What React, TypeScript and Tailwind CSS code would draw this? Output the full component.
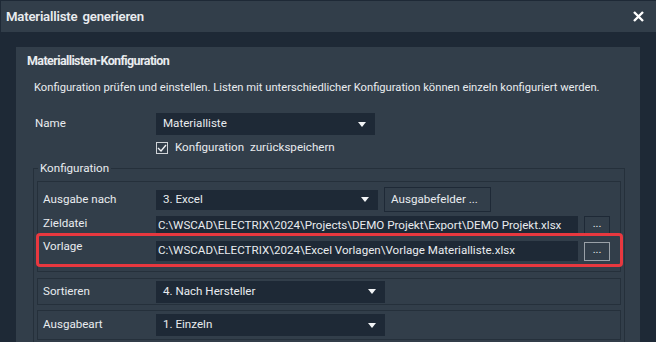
import React from 'react'

function Arrow() {
  return (
    <svg width="8" height="5" viewBox="0 0 8 5" className="shrink-0">
      <path d="M0 0h8L4 5z" fill="#f2f4f6" />
    </svg>
  )
}

function Select({ value, width, height = 'h-[22px]' }: { value: string; width: string; height?: string }) {
  return (
    <div className={`${width} ${height} bg-[#1e2936] flex items-center justify-between pl-[7px] pr-[9px]`}>
      <span>{value}</span>
      <Arrow />
    </div>
  )
}

function PathField({ value, focused }: { value: string; focused?: boolean }) {
  return (
    <div className="flex items-center gap-[6px]">
      <div className="w-[422px] h-[20px] bg-[#1e2936] flex items-center pl-[2px] whitespace-nowrap overflow-hidden">
        {value}
      </div>
      <div
        className={`w-[26px] h-[19px] border flex items-center justify-center text-[11px] leading-none pb-[4px] ${
          focused ? 'border-[#9aa1a8]' : 'border-[#1e2936]'
        }`}
      >
        ...
      </div>
    </div>
  )
}

export default function App() {
  return (
    <div className="w-[656px] h-[342px] overflow-hidden bg-[#1e2936] font-['Roboto',sans-serif] text-[11.6px] text-[#e9ecef] flex flex-col">
      <div className="h-[32px] shrink-0 bg-[#323e4a] border-t border-l border-[#1e2936] flex items-center justify-between pl-[5px] pr-[12px]">
        <span className="text-[13.2px] font-semibold tracking-[-0.2px] [word-spacing:2px]">Materialliste generieren</span>
        <svg width="11" height="11" viewBox="0 0 11 11">
          <path d="M1 1l9 9M10 1l-9 9" stroke="#fff" strokeWidth="2.4" />
        </svg>
      </div>

      <div className="flex-1 pt-[15px] px-[16px]">
        <div className="h-full bg-[#323e4a] pl-[11px] pr-[16px] pt-[6px] flex flex-col">
          <div className="h-[16px] text-[12.5px] font-bold tracking-[-0.6px] leading-[16px]">Materiallisten-Konfiguration</div>
          <div className="mt-[11px] pl-[7px] text-[11.2px] leading-[16px] whitespace-nowrap">
            Konfiguration prüfen und einstellen. Listen mit unterschiedlicher Konfiguration können einzeln konfiguriert werden.
          </div>

          <div className="mt-[17px] flex items-center">
            <span className="w-[129px] pl-[8px]">Name</span>
            <Select value="Materialliste" width="w-[219px]" />
          </div>
          <div className="mt-[7px] flex items-center pl-[129px] gap-[7px] h-[12px]">
            <div className="w-[12px] h-[12px] border border-[#cfd3d7] flex items-center justify-center">
              <svg width="10" height="8" viewBox="0 0 10 8">
                <path d="M1 4l3 3 5-6" stroke="#eef0f2" strokeWidth="1.4" fill="none" />
              </svg>
            </div>
            <span className="[word-spacing:3px]">Konfiguration zurückspeichern</span>
          </div>

          <fieldset className="mt-[7px] ml-[6px] w-[592px] border border-[#25303b] px-[3px] pb-[4px] flex-1">
            <legend className="ml-[1px] px-[2px] leading-[14px]">Konfiguration</legend>

            <div className="mt-[6px] relative border border-[#25303b] pl-[5px] pt-[5px] pb-[10px]">
              <div className="flex items-center h-[25px]">
                <span className="w-[113px]">Ausgabe nach</span>
                <Select value="3. Excel" width="w-[222px]" height="h-[20px]" />
                <div className="ml-[6px] h-[25px] w-[107px] pl-[6px] border border-[#1e2936] flex items-center">Ausgabefelder ...</div>
              </div>
              <div className="mt-[3px] flex items-center h-[21px]">
                <span className="w-[113px] -mt-[4px]">Zieldatei</span>
                <PathField value="C:\WSCAD\ELECTRIX\2024\Projects\DEMO Projekt\Export\DEMO Projekt.xlsx" />
              </div>
              <div className="mt-[5px] flex items-center h-[20px]">
                <span className="w-[113px] -mt-[8px]">Vorlage</span>
                <PathField value="C:\WSCAD\ELECTRIX\2024\Excel Vorlagen\Vorlage Materialliste.xlsx" focused />
              </div>
              <div className="absolute left-[-2px] right-[-3px] top-[51px] h-[34px] border-[3px] border-[#e8383f] rounded-[4px]" />
            </div>

            <div className="mt-[6px] border border-[#25303b] pl-[5px] h-[27px] flex items-center">
              <span className="w-[113px]">Sortieren</span>
              <Select value="4. Nach Hersteller" width="w-[229px]" />
            </div>
            <div className="mt-[5px] border border-[#25303b] pl-[5px] h-[30px] flex items-center">
              <span className="w-[113px]">Ausgabeart</span>
              <Select value="1. Einzeln" width="w-[229px]" />
            </div>
          </fieldset>
        </div>
      </div>
    </div>
  )
}
